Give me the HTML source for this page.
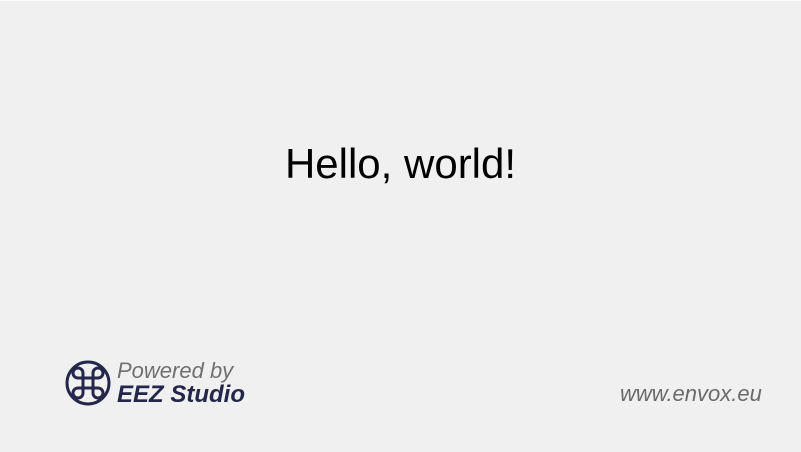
<!DOCTYPE html>
<html><head><style>
html,body{margin:0;padding:0}
body{width:801px;height:452px;background:#f0f0f0;position:relative;overflow:hidden;font-family:"Liberation Sans",sans-serif;border-top:1px solid #fafafa;box-sizing:border-box}
.h{position:absolute;left:0;width:801px;top:137px;text-align:center;font-size:42px;color:#000;line-height:52px}
.p{position:absolute;left:117px;top:357px;font-size:22px;font-style:italic;color:#707070;line-height:25px}
.e{position:absolute;left:117px;top:380px;font-size:24px;font-style:italic;font-weight:bold;color:#24264a;line-height:27px}
.w{position:absolute;left:620px;top:380px;font-size:22px;font-style:italic;color:#6a6a6a;line-height:25px}
svg{position:absolute;left:65px;top:359px}
</style></head><body>
<div class="h">Hello, world!</div>
<svg width="46" height="46" viewBox="0 0 46 46" fill="none" stroke="#24264a" stroke-width="3">
<circle cx="23" cy="23" r="21"/>
<path d="M18 18 V13 a5 5 0 1 0 -5 5 H33 a5 5 0 1 0 -5 -5 V33 a5 5 0 1 0 5 -5 H13 a5 5 0 1 0 5 5 Z"/>
</svg>
<div class="p">Powered by</div>
<div class="e">EEZ Studio</div>
<div class="w">www.envox.eu</div>
</body></html>
